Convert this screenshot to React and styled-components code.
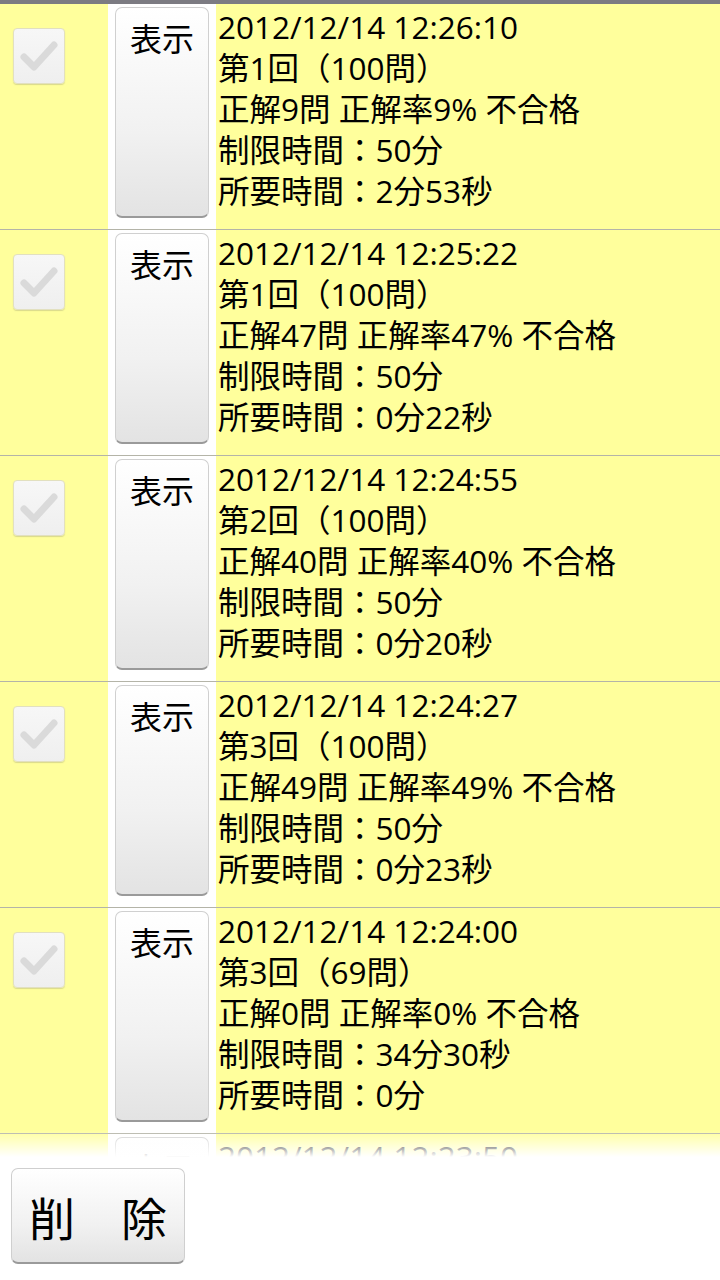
import React from "react";
import styled, { createGlobalStyle } from "styled-components";

const records = [
  { date: "2012/12/14 12:26:10", round: "第1回（100問）", score: "正解9問 正解率9% 不合格", limit: "制限時間：50分", spent: "所要時間：2分53秒" },
  { date: "2012/12/14 12:25:22", round: "第1回（100問）", score: "正解47問 正解率47% 不合格", limit: "制限時間：50分", spent: "所要時間：0分22秒" },
  { date: "2012/12/14 12:24:55", round: "第2回（100問）", score: "正解40問 正解率40% 不合格", limit: "制限時間：50分", spent: "所要時間：0分20秒" },
  { date: "2012/12/14 12:24:27", round: "第3回（100問）", score: "正解49問 正解率49% 不合格", limit: "制限時間：50分", spent: "所要時間：0分23秒" },
  { date: "2012/12/14 12:24:00", round: "第3回（69問）", score: "正解0問 正解率0% 不合格", limit: "制限時間：34分30秒", spent: "所要時間：0分" },
  { date: "2012/12/14 12:23:50", round: "第2回（100問）", score: "正解12問 正解率12% 不合格", limit: "制限時間：50分", spent: "所要時間：1分02秒" },
];

const App = () => {
  return (
    <>
      <GlobalStyle />
      <Screen>
        <TopBar />
        <List>
          {records.map((r, i) => (
            <Row key={i}>
              <CheckCell>
                <CheckBox>
                  <svg width="40" height="34" viewBox="0 0 40 34">
                    <path
                      d="M5 18 L15 28 L35 6"
                      fill="none"
                      stroke="#dadada"
                      strokeWidth="7"
                      strokeLinecap="round"
                      strokeLinejoin="round"
                    />
                  </svg>
                </CheckBox>
              </CheckCell>
              <ButtonCell>
                <ShowButton>表示</ShowButton>
              </ButtonCell>
              <Info>
                <Line>{r.date}</Line>
                <Line>{r.round}</Line>
                <Line>{r.score}</Line>
                <Line>{r.limit}</Line>
                <Line>{r.spent}</Line>
              </Info>
            </Row>
          ))}
          <Fade />
        </List>
        <Footer>
          <DeleteButton>削　除</DeleteButton>
        </Footer>
      </Screen>
    </>
  );
};

export default App;

const GlobalStyle = createGlobalStyle`
  html, body {
    margin: 0;
    padding: 0;
    background: #ffffff;
  }
  * {
    box-sizing: border-box;
  }
`;

const Screen = styled.div`
  width: 720px;
  height: 1280px;
  display: flex;
  flex-direction: column;
  overflow: hidden;
  font-family: "Open Sans", "Noto Sans CJK JP", sans-serif;
  color: #000;
  background: #fff;
`;

const TopBar = styled.div`
  height: 4px;
  flex-shrink: 0;
  background: #7c7b82;
`;

const List = styled.div`
  position: relative;
  height: 1156px;
  flex-shrink: 0;
  overflow: hidden;
`;

const Row = styled.div`
  display: grid;
  grid-template-columns: 108px 108px 1fr;
  height: 226px;
  border-bottom: 1px solid #b4b4a8;
`;

const CheckCell = styled.div`
  background: #ffff9c;
  padding: 24px 0 0 13px;
`;

const CheckBox = styled.div`
  width: 52px;
  height: 56px;
  border-radius: 4px;
  border: 1px solid #e2e0c0;
  background: linear-gradient(#f7f7f7, #efefef);
  box-shadow: 0 1px 1px rgba(150, 150, 110, 0.35);
  display: flex;
  align-items: center;
  justify-content: center;
`;

const ButtonCell = styled.div`
  background: #fff;
  padding: 3px 7px 7px 7px;
`;

const ShowButton = styled.div`
  height: 211px;
  border-radius: 7px;
  border: 1px solid #d0d0d0;
  border-bottom: 2px solid #9a9a9a;
  background: linear-gradient(#ffffff, #f1f1f1 60%, #e3e3e3);
  text-align: center;
  font-size: 32px;
  line-height: 1;
  padding-top: 15px;
`;

const Info = styled.div`
  background: #ffff9c;
  padding: 2px 0 0 2px;
  display: flex;
  flex-direction: column;
`;

const Line = styled.div`
  font-size: 31.5px;
  line-height: 41px;
  white-space: nowrap;
`;

const Fade = styled.div`
  position: absolute;
  left: 0;
  right: 0;
  bottom: 0;
  height: 30px;
  background: linear-gradient(rgba(255, 255, 255, 0), #ffffff 90%);
`;

const Footer = styled.div`
  flex: 1;
  background: #fff;
  padding: 8px 0 0 11px;
`;

const DeleteButton = styled.div`
  width: 174px;
  height: 96px;
  border-radius: 7px;
  border: 1px solid #cfcfcf;
  border-bottom: 2px solid #9a9a9a;
  background: linear-gradient(#ffffff, #f1f1f1 60%, #e3e3e3);
  display: flex;
  align-items: center;
  justify-content: center;
  font-size: 46px;
`;
